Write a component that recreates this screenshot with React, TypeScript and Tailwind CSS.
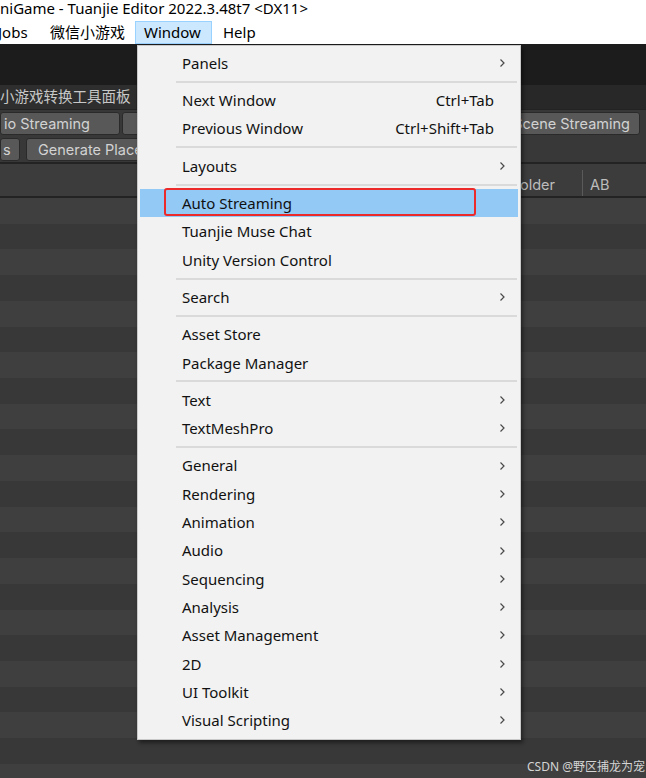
type Entry = { label: string; shortcut?: string; sub?: boolean; active?: boolean } | 'sep'

const menu: Entry[] = [
  { label: 'Panels', sub: true },
  'sep',
  { label: 'Next Window', shortcut: 'Ctrl+Tab' },
  { label: 'Previous Window', shortcut: 'Ctrl+Shift+Tab' },
  'sep',
  { label: 'Layouts', sub: true },
  'sep',
  { label: 'Auto Streaming', active: true },
  { label: 'Tuanjie Muse Chat' },
  { label: 'Unity Version Control' },
  'sep',
  { label: 'Search', sub: true },
  'sep',
  { label: 'Asset Store' },
  { label: 'Package Manager' },
  'sep',
  { label: 'Text', sub: true },
  { label: 'TextMeshPro', sub: true },
  'sep',
  { label: 'General', sub: true },
  { label: 'Rendering', sub: true },
  { label: 'Animation', sub: true },
  { label: 'Audio', sub: true },
  { label: 'Sequencing', sub: true },
  { label: 'Analysis', sub: true },
  { label: 'Asset Management', sub: true },
  { label: '2D', sub: true },
  { label: 'UI Toolkit', sub: true },
  { label: 'Visual Scripting', sub: true },
]

function Arrow() {
  return (
    <svg width="7" height="10" viewBox="0 0 7 10" className="shrink-0">
      <path d="M1.5 1.5 5 5 1.5 8.5" fill="none" stroke="#4a4a4a" strokeWidth="1.2" />
    </svg>
  )
}

function WindowMenu() {
  return (
    <div className="absolute left-[137px] top-[45px] w-[384px] border border-[#c9c9c9] bg-[#f2f2f2] pt-[3px] pb-[4px] shadow-[2px_3px_4px_rgba(0,0,0,0.45)]">
      {menu.map((e, i) =>
        e === 'sep' ? (
          <div key={i} className="flex h-[9px] items-center pl-[38px] pr-[3px]">
            <div className="h-[2px] w-full bg-[#dadada]" />
          </div>
        ) : (
          <div
            key={i}
            className={
              'relative mx-[2px] flex h-[28.3px] items-center pl-[42px] pr-[12px] text-[15px] text-[#111111] ' +
              (e.active ? 'bg-[#93c9f5]' : '')
            }
          >
            <span className="flex-1">{e.label}</span>
            {e.shortcut && <span className="pr-[12px]">{e.shortcut}</span>}
            {e.sub && <Arrow />}
            {e.active && (
              <div className="absolute left-[24px] top-[-1px] h-[28px] w-[312px] rounded-[3px] border-2 border-[#ec2a2a]" />
            )}
          </div>
        )
      )}
    </div>
  )
}

function DarkButton({ children, className }: { children?: React.ReactNode; className?: string }) {
  return (
    <div
      className={
        'flex h-[23px] items-center overflow-hidden whitespace-nowrap rounded-[3px] border border-[#2a2a2a] bg-[#585858] text-[14.5px] text-[#d2d2d2] ' +
        (className ?? '')
      }
    >
      {children}
    </div>
  )
}

export default function App() {
  const rows = Array.from({ length: 23 })
  return (
    <div className="relative h-[778px] w-[646px] overflow-hidden bg-[#383838] font-['Noto_Sans','Noto_Sans_CJK_SC',sans-serif]">
      {/* title bar */}
      <div className="flex h-[20px] items-center bg-white pb-[3px] text-[15px] text-black whitespace-nowrap">
        niGame - Tuanjie Editor 2022.3.48t7 &lt;DX11&gt;
      </div>

      {/* menu bar */}
      <div className="flex h-[24px] items-center bg-white text-[15px] text-black whitespace-nowrap">
        <span className="ml-[-2px] w-[52px]">Jobs</span>
        <span className="w-[85px]">微信小游戏</span>
        <span className="flex h-[23px] w-[77px] items-center border border-[#99d1ff] bg-[#cce8ff] pl-[8px]">Window</span>
        <span className="ml-[11px]">Help</span>
      </div>

      {/* toolbar */}
      <div className="h-[41px] bg-[#1c1c1c]" />

      {/* tab strip */}
      <div className="flex h-[24px] items-center bg-[#282828] font-['Inter','Noto_Sans_CJK_SC',sans-serif] text-[14.5px] text-[#c8c8c8]">
        <div className="flex h-full w-[136px] items-center whitespace-nowrap bg-[#2e2e2e]">小游戏转换工具面板</div>
      </div>

      {/* button rows */}
      <div className="bg-[#383838] font-['Inter',sans-serif]">
        <div className="flex h-[28px] items-center gap-[2px] border-t border-[#232323]">
          <DarkButton className="w-[120px] pl-[3px]">io Streaming</DarkButton>
          <DarkButton className="w-[270px]" />
          <DarkButton className="w-[246px] justify-end pr-[9px]">Scene Streaming</DarkButton>
        </div>
        <div className="flex h-[25px] items-center gap-[6px]">
          <DarkButton className="w-[20px] pl-[2px]">s</DarkButton>
          <DarkButton className="w-[210px] pl-[11px]">Generate Placeholder</DarkButton>
        </div>
      </div>

      {/* list header */}
      <div className="flex h-[36px] items-center border-y-2 border-[#232323] bg-[#3c3c3c] pt-[10px] font-['Inter',sans-serif] text-[14.5px] text-[#bdbdbd]">
        <span className="ml-[512px] w-[70px]">Folder</span>
        <div className="mt-[-4px] h-[26px] w-px bg-[#5a5a5a]" />
        <span className="ml-[7px]">AB</span>
      </div>

      {/* rows */}
      {rows.map((_, i) => (
        <div key={i} className={'h-[25.72px] ' + (i % 2 === 0 ? 'bg-[#3f3f3f]' : 'bg-[#383838]')} />
      ))}

      <WindowMenu />

      <div className="absolute left-[527px] top-[758px] text-[12px] text-[#d4d4d4]">CSDN @野区捕龙为宠</div>
    </div>
  )
}
